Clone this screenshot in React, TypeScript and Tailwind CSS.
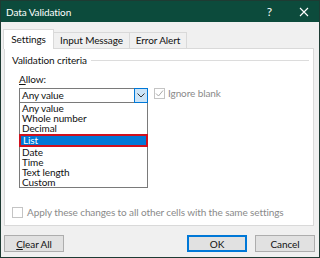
import React from "react";

const items = ["Any value", "Whole number", "Decimal", "List", "Date", "Time", "Text length", "Custom"];

export default function App() {
  return (
    <div
      className="w-[320px] h-[258px] bg-[#f0f0f0] border border-[#1e3b33] flex flex-col overflow-hidden text-[#111] text-[10px] tracking-[-0.1px]"
      style={{ fontFamily: 'Lato, "Noto Sans", sans-serif' }}
    >
      {/* title bar */}
      <div className="h-[21px] bg-[#0c4b3c] flex items-center justify-between pl-[5px] pr-[10px] text-white shrink-0">
        <span className="text-[10px] leading-none">Data Validation</span>
        <div className="flex items-center gap-[27px]">
          <span className="text-[12px] leading-none">?</span>
          <svg width="10" height="10" viewBox="0 0 10 10">
            <path d="M1 1 L9 9 M9 1 L1 9" stroke="white" strokeWidth="1.1" />
          </svg>
        </div>
      </div>

      {/* tabs */}
      <div className="flex items-end pl-[2px] pt-[7px] shrink-0">
        <div className="w-[51px] h-[20px] bg-white border border-b-0 border-[#d9d9d9] flex items-center justify-center -mb-px relative z-10">
          Settings
        </div>
        <div className="w-[76px] h-[16px] bg-[#f0f0f0] border border-b-0 border-l-0 border-[#d9d9d9] flex items-center justify-center">
          Input Message
        </div>
        <div className="w-[57px] h-[16px] bg-[#f0f0f0] border border-b-0 border-l-0 border-[#d9d9d9] flex items-center justify-center">
          Error Alert
        </div>
      </div>

      {/* panel */}
      <div className="ml-[3px] w-[310px] h-[178px] bg-white border border-[#d9d9d9] shrink-0 flex flex-col">
        <div className="flex items-center pl-[7px] pr-[4px] pt-[5px]">
          <span className="leading-[13px]">Validation criteria</span>
          <div className="flex-1 h-px bg-[#dcdcdc] ml-[4px]" />
        </div>
        <div className="pl-[14px] pt-[6px] leading-[13px]">
          <span className="underline">A</span>llow:
        </div>
        <div className="flex items-start pl-[14px] pt-[2px]">
          <div className="flex flex-col w-[129px]">
            <div className="h-[15px] border border-[#7a7a7a] flex items-center justify-between">
              <span className="pl-[2px] leading-[13px]">Any value</span>
              <div className="w-[14px] h-[15px] -mr-px -my-px bg-[#cce4f7] border border-[#0078d7] flex items-center justify-center">
                <svg width="8" height="5" viewBox="0 0 8 5">
                  <path d="M0.5 0.5 L4 4 L7.5 0.5" stroke="#333" strokeWidth="1" fill="none" />
                </svg>
              </div>
            </div>
            <div className="border border-t-0 border-[#7a7a7a] bg-white">
              {items.map((it) =>
                it === "List" ? (
                  <div
                    key={it}
                    className="h-[13px] -mx-px bg-[#0078d7] border-2 border-[#d0101d] text-white flex items-center pl-[2px] leading-[9px]"
                  >
                    {it}
                  </div>
                ) : (
                  <div key={it} className="h-[10.2px] flex items-center pl-[2px] leading-[10px]">
                    {it}
                  </div>
                )
              )}
            </div>
          </div>
          <div className="flex items-center ml-[6px] mt-[-1px] text-[#8a8a8a]">
            <div className="w-[11px] h-[11px] border border-[#c4c4c4] bg-white flex items-center justify-center">
              <svg width="9" height="9" viewBox="0 0 9 9">
                <path d="M1 4.5 L3.5 7 L8 1.5" stroke="#a8a8a8" strokeWidth="1" fill="none" />
              </svg>
            </div>
            <span className="ml-[3px] leading-[13px]">Ignore blank</span>
          </div>
        </div>
        <div className="flex-1" />
        <div className="flex items-center pl-[7px] pb-[6px] text-[#8a8a8a]">
          <div className="w-[11px] h-[11px] border border-[#c4c4c4] bg-white shrink-0" />
          <span className="ml-[4px] leading-[13px] whitespace-nowrap">Apply these changes to all other cells with the same settings</span>
        </div>
      </div>

      {/* buttons */}
      <div className="flex items-center pl-[3px] pr-[4px] pt-[9px] shrink-0">
        <div className="w-[60px] h-[17px] bg-[#e1e1e1] border border-[#adadad] flex items-center justify-center leading-none">
          <span className="underline">C</span>lear All
        </div>
        <div className="flex-1" />
        <div className="w-[60px] h-[17px] bg-[#e1e1e1] border-2 border-[#0078d7] flex items-center justify-center leading-none">
          OK
        </div>
        <div className="w-[60px] h-[17px] ml-[8px] bg-[#e1e1e1] border border-[#adadad] flex items-center justify-center leading-none">
          Cancel
        </div>
      </div>
    </div>
  );
}
